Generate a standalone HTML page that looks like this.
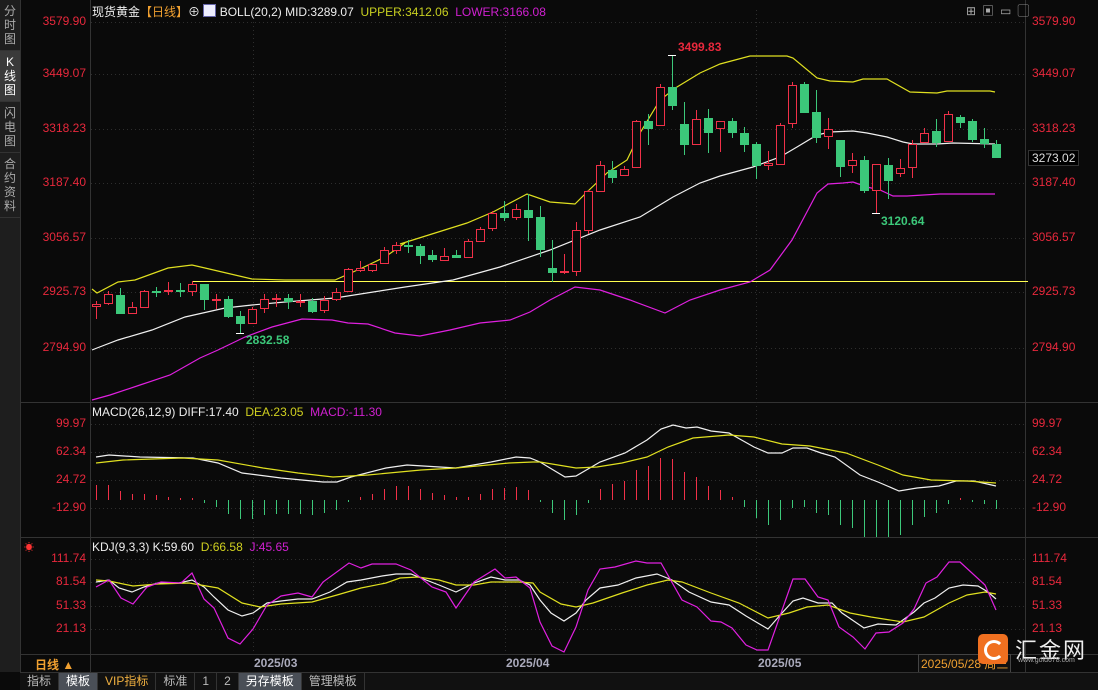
<!DOCTYPE html>
<html><head><meta charset="utf-8"><style>
body{margin:0;width:1098px;height:689px;background:#0a0a0a;overflow:hidden;font-family:"Liberation Sans","Noto Sans CJK SC",sans-serif;position:relative}
.side{position:absolute;left:0;top:0;width:20px;height:672px;background:#1e1e1e;border-right:1px solid #333}
.side div{color:#aaa;font-size:12px;line-height:14px;text-align:center;padding:4px 0;border-bottom:1px solid #333}
.side div.sel{background:#3a3a3a;color:#fff}
.t{position:absolute;font-size:12px;white-space:nowrap}
.r{color:#e8283c}
.ax{position:absolute;font-size:12px;color:#e8283c}
.tabs{position:absolute;left:20px;top:672px;width:1078px;height:17px;background:#111;border-top:1px solid #333}
.tabs span{float:left;font-size:12px;color:#bbb;padding:0 7px;line-height:17px;border-right:1px solid #333}
.tabs span.s{background:#4a4f57;color:#fff}
</style></head><body>
<div class="side"><div>分<br>时<br>图</div><div class="sel">K<br>线<br>图</div><div>闪<br>电<br>图</div><div>合<br>约<br>资<br>料</div></div>
<svg id="s" width="1098" height="689" style="position:absolute;left:0;top:0"></svg>
<div class="t" style="left:92px;top:3px;color:#eee">现货黄金<span style="color:#f0a030">【日线】</span>⊕ <span style="display:inline-block;width:11px;height:11px;background:#eef;border:1px solid #66a;vertical-align:-1px"></span> BOLL(20,2) MID:3289.07 &nbsp;<span style="color:#c8d020">UPPER:3412.06</span> &nbsp;<span style="color:#d020d0">LOWER:3166.08</span></div>
<div class="t" style="left:92px;top:405px;color:#eee">MACD(26,12,9) DIFF:17.40 &nbsp;<span style="color:#d0d020">DEA:23.05</span> &nbsp;<span style="color:#d020d0">MACD:-11.30</span></div>
<div class="t" style="left:92px;top:540px;color:#eee">KDJ(9,3,3) K:59.60 &nbsp;<span style="color:#d0d020">D:66.58</span> &nbsp;<span style="color:#d020d0">J:45.65</span></div>
<div class="t" style="left:24px;top:539px;color:#f33;font-size:10px">☀</div>
<div class="t r" style="left:678px;top:40px;font-weight:bold">3499.83</div>
<div class="t" style="left:246px;top:333px;color:#3cc87a;font-weight:bold">2832.58</div>
<div class="t" style="left:881px;top:214px;color:#3cc87a;font-weight:bold">3120.64</div>
<div class="t" style="left:1028px;top:150px;color:#ddd;background:#000;border:1px solid #333;padding:0 3px">3273.02</div>
<div class="t" style="left:35px;top:656px;color:#f0a030;font-weight:bold">日线 ▲</div>
<div class="t" style="left:254px;top:656px;color:#aab;font-weight:bold">2025/03</div>
<div class="t" style="left:506px;top:656px;color:#aab;font-weight:bold">2025/04</div>
<div class="t" style="left:758px;top:656px;color:#aab;font-weight:bold">2025/05</div>
<div class="t" style="left:918px;top:654px;color:#f0a030;border:1px solid #444;padding:0 2px;background:#111">2025/05/28 周三</div>
<div style="position:absolute;left:978px;top:634px;width:30px;height:30px;background:#f07020;border-radius:5px"><div style="position:absolute;left:6px;top:6px;width:14px;height:14px;border:3px solid #fff;border-radius:50%;border-right-color:transparent"></div></div>
<div class="t" style="left:1015px;top:633px;color:#eee;font-size:22px;letter-spacing:2px">汇金网</div>
<div class="t" style="left:1018px;top:657px;color:#aaa;font-size:7px">www.gold678.com</div>
<div class="t" style="left:966px;top:2px;color:#aaa;font-size:12px;letter-spacing:6px">⊞▣▭▢</div>
<div class="tabs"><span>指标</span><span class="s">模板</span><span style="color:#f0b040">VIP指标</span><span>标准</span><span>1</span><span>2</span><span class="s">另存模板</span><span>管理模板</span></div>
<script>
var s=document.getElementById('s'),h='';
function L(x1,y1,x2,y2,c,d){h+='<line x1="'+x1+'" y1="'+y1+'" x2="'+x2+'" y2="'+y2+'" stroke="'+c+'" stroke-width="1"'+(d?' stroke-dasharray="1,3"':'')+'/>';}
function P(pts,c){h+='<polyline fill="none" stroke="'+c+'" stroke-width="1.2" points="'+pts+'"/>';}
// frames
L(90.5,0,90.5,672,'#333');L(1025.5,0,1025.5,672,'#333');
L(20,402.5,1098,402.5,'#333');L(20,537.5,1098,537.5,'#333');L(20,654.5,1098,654.5,'#333');
[22,74,129,183,238,292,348,424,452,480,508,559,582,606,629].forEach(function(y){L(91,y+.5,1025,y+.5,'#2e2e2e',1)});
[253,505,756].forEach(function(x){L(x+.5,10,x+.5,654,'#2e2e2e',1)});
var ax='';
[[22,'3579.90'],[74,'3449.07'],[129,'3318.23'],[183,'3187.40'],[238,'3056.57'],[292,'2925.73'],[348,'2794.90'],[424,'99.97'],[452,'62.34'],[480,'24.72'],[508,'-12.90'],[559,'111.74'],[582,'81.54'],[606,'51.33'],[629,'21.13']].forEach(function(a){
ax+='<div class="ax" style="right:1012px;top:'+(a[0]-8)+'px">'+a[1]+'</div>';
if(!(a[0]==22&&false))ax+='<div class="ax" style="left:1032px;top:'+(a[0]-8)+'px">'+a[1]+'</div>';});
document.body.insertAdjacentHTML('beforeend',ax);
// BOLL
L(192,281.5,1028,281.5,'#ffff50');
P('92,289 97,293 118,282 135,280 168,268 192,265 205,268 252,279 285,280 335,280 362,268 385,257 405,243 400,244 467,223 493,212 527,194 550,202 575,204 587,192 607,173 627,160 640,133 660,100 677,87 700,73 720,64 750,56 787,56 793,58 817,78 830,81 853,82 863,79 887,79 910,92 937,93 947,91 990,91 995,92','#e0e020');
P('92,350 97,348 118,340 152,330 185,317 225,308 252,305 285,302 335,298 405,287 453,280 500,267 550,250 600,230 640,217 673,197 700,183 720,176 753,167 780,157 797,147 817,135 830,132 853,131 867,133 887,137 903,142 913,144 937,144 953,143 995,144','#f0f0f0');
P('92,400 110,395 140,385 170,375 200,358 218,350 245,337 272,327 302,319 332,320 348,323 368,324 395,333 420,336 450,330 480,323 510,320 530,312 550,300 575,287 600,290 630,300 665,313 690,300 720,290 750,282 770,270 792,240 817,193 828,184 843,183 853,182 867,187 880,190 893,196 907,196 940,194 995,194','#e020e0');
// candles [bt,bb,wt,wb,red?]
var C=[[304,306,301,319,1],[294,303,291,305,1],[295,313,288,314,0],[307,313,302,313,1],[291,307,290,307,1],[291,292,287,297,0],[290,291,282,295,1],[290,291,283,297,0],[284,291,281,296,1],[284,299,284,310,0],[299,300,294,309,1],[299,316,296,318,0],[316,323,311,333,0],[309,323,307,323,1],[299,308,294,313,1],[298,299,294,307,1],[298,301,294,309,0],[301,302,294,307,1],[301,311,298,313,0],[300,310,296,313,1],[292,299,288,301,1],[269,291,268,291,1],[268,270,261,272,1],[264,270,264,272,1],[250,263,247,263,1],[245,250,242,254,1],
[245,246,240,253,0],[246,255,244,264,0],[255,259,250,262,0],[256,260,248,260,1],[255,257,250,258,0],[241,257,239,257,1],[229,241,227,241,1],[213,228,211,231,1],[213,217,201,221,0],[209,217,204,220,1],[210,217,194,241,0],[217,249,206,257,0],[268,272,240,282,0],[271,272,254,274,1],[230,271,222,276,1],[191,230,190,234,1],[165,191,161,191,1],[170,177,161,183,0],[169,175,166,175,1],[121,167,120,167,1],[121,128,114,145,0],[87,125,84,125,1],[87,105,55,110,0],[124,144,102,155,0],[119,144,110,144,1],[118,132,109,153,0],[121,128,121,152,1],[121,132,118,138,0],[133,144,127,152,0],[144,165,142,179,0],[163,165,151,170,1],[125,164,123,164,1],[85,123,82,128,1],[84,112,82,113,0],[112,137,90,143,0],[129,136,118,149,1],[140,166,140,177,0],[160,165,153,173,1],[160,190,156,193,0],[164,190,164,213,1],[165,180,158,199,0],[168,173,159,177,1],[144,167,140,178,1],[133,142,128,142,1],[131,142,119,147,0],[114,141,111,141,1],[117,122,115,128,0],[121,139,119,142,0],[139,143,128,148,0],[144,157,140,157,0]];
C.forEach(function(c,i){var x=96.5+i*12,col=c[4]?'#f03048':'#3cc87a';
L(x,c[2],x,c[3],col);
h+='<rect x="'+(x-4)+'" y="'+(c[0]+.5)+'" width="8" height="'+Math.max(1,c[1]-c[0])+'" fill="'+(c[4]?'#0a0a0a':col)+'" stroke="'+col+'"/>';});
L(668,55.5,676,55.5,'#fff');L(236,333.5,244,333.5,'#fff');L(872,213.5,880,213.5,'#fff');
// MACD hist
var M=[485,485,491,494,494,495,497,498,498,503,507,514,519,519,515,514,514,514,515,513,510,502,497,494,489,486,486,489,493,495,497,497,494,489,488,487,490,502,513,520,515,503,489,484,481,470,466,458,459,472,477,486,490,497,507,518,525,520,508,507,513,515,525,528,537,537,537,535,525,517,513,504,498,502,504,509];
var gr=[9,10,11,12,13,14,15,16,17,18,19,20,21,37,38,39,40,54,55,56,57,58,59,60,61,62,63,64,65,66,67,68,69,70,71,72,73,74,75];
M.forEach(function(y,i){var x=96.5+i*12,red=y<500;L(x,red?y:500,x,red?500:y,red?'#f03048':'#3cc87a');});
P('96,457 109,455 140,457 193,458 218,463 242,473 281,478 323,482 337,482 351,477 386,468 407,465 456,468 491,462 516,457 530,458 540,462 565,477 576,476 600,462 625,453 647,440 661,429 673,425 686,428 697,427 711,431 729,433 754,447 768,453 782,453 793,448 807,448 821,453 835,457 860,475 878,482 899,491 917,488 939,486 956,481 974,481 996,486','#f0f0f0');
P('96,463 123,460 182,458 218,460 263,468 298,473 333,477 368,475 421,470 456,468 509,463 533,462 540,462 576,468 597,467 622,463 647,457 668,447 693,438 729,435 754,437 782,444 810,446 846,453 878,465 903,475 931,480 967,481 996,483','#e0e020');
// KDJ
P('96,582 109,580 119,588 132,592 144,587 158,583 179,583 192,580 204,587 214,597 228,610 242,616 253,613 267,603 281,601 298,599 312,599 330,592 347,582 361,580 382,576 396,574 411,574 421,578 439,585 456,592 474,583 491,577 505,580 519,580 530,585 540,600 551,613 564,621 576,613 586,600 600,588 618,585 636,578 657,574 672,580 689,592 711,602 729,605 746,616 768,629 782,613 793,601 803,598 818,603 832,603 842,613 864,628 878,624 896,625 914,612 924,603 935,598 949,588 963,585 978,586 988,592 996,599','#f0f0f0');
P('96,580 109,581 133,586 158,584 189,583 218,588 242,603 260,607 281,604 312,602 337,595 361,588 386,583 400,578 418,577 439,580 456,585 474,585 491,582 519,582 533,583 540,592 561,604 576,607 593,603 622,593 647,585 668,580 682,582 711,593 739,603 768,618 789,613 807,607 828,605 850,613 871,617 903,622 924,617 949,603 967,595 985,592 996,594','#e0e020');
P('96,587 109,580 121,598 133,604 147,587 161,582 181,583 192,573 204,599 214,608 228,638 240,644 253,629 267,605 281,596 298,593 312,597 323,582 349,563 361,568 372,564 396,564 411,570 432,587 446,592 456,608 474,582 495,569 505,578 516,577 530,588 540,622 552,646 564,652 576,627 588,590 600,569 615,567 636,561 647,563 661,563 682,600 697,607 711,621 721,622 732,628 746,645 757,650 768,650 793,579 805,579 818,597 828,600 839,627 853,637 865,649 876,633 889,632 903,623 914,609 926,583 937,577 949,562 960,562 985,585 996,610','#e020e0');
s.innerHTML=h;
</script>
</body></html>
